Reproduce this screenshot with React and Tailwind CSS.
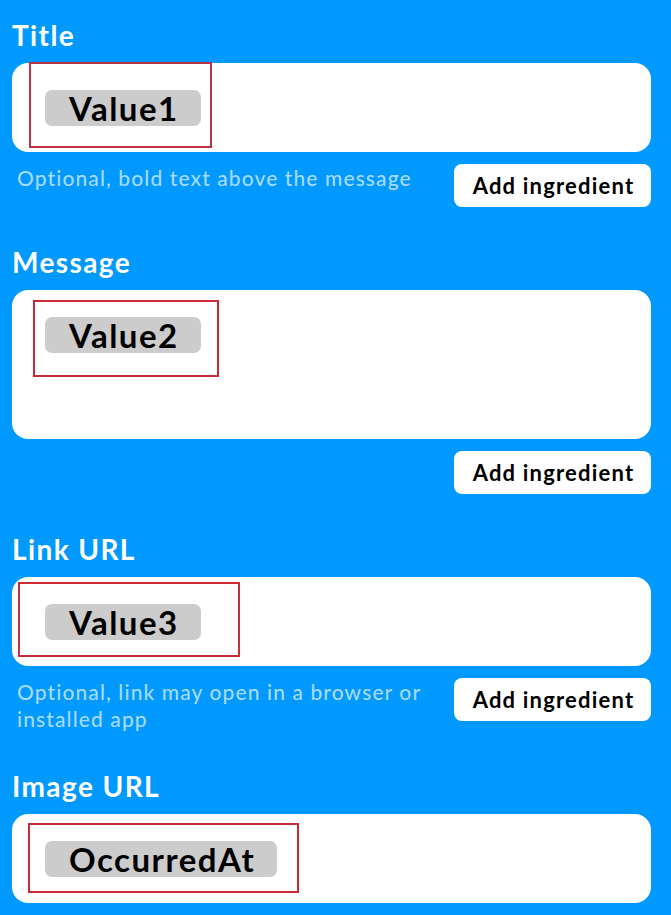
import React from "react";

const font = { fontFamily: "Lato, 'Noto Sans', sans-serif" };

function Label({ children, mt }) {
  return (
    <div className={`${mt} text-[28px] leading-[32px] font-bold tracking-[1.4px] text-white`}>
      {children}
    </div>
  );
}

function Pill({ children }) {
  return (
    <span className="inline-flex h-[36px] items-center rounded-[7px] bg-[#cccccc] pl-[24px] pr-[22px] text-[33px] leading-[36px] font-bold tracking-[1.5px] text-black">
      {children}
    </span>
  );
}

function Card({ tall, value, red }) {
  return (
    <div className={`relative mt-[12px] ${tall ? "h-[149px]" : "h-[89px]"} rounded-[16px] bg-white pl-[33px] pt-[27px]`}>
      <Pill>{value}</Pill>
      <div className={`absolute border-2 ${red}`} />
    </div>
  );
}

function Button() {
  return (
    <button className="flex h-[43px] w-[197px] shrink-0 items-center justify-center rounded-[8px] bg-white pl-[2px] text-[22px] font-bold tracking-[1.2px] text-black">
      Add ingredient
    </button>
  );
}

function Row({ help }) {
  return (
    <div className="mt-[12px] flex gap-[14px]">
      <div className="flex-1 pl-[5px] text-[21px] leading-[27px] font-medium tracking-[1.1px] text-[#a6daff]">{help}</div>
      <Button />
    </div>
  );
}

export default function App() {
  return (
    <div className="h-[915px] w-[671px] overflow-hidden bg-[#0099ff] pl-3 pr-5" style={font}>
      <Label mt="pt-[19px]">Title</Label>
      <Card value="Value1" red="border-[#b8343f] left-[17px] top-[-1px] w-[183px] h-[86px]" />
      <Row help="Optional, bold text above the message" />

      <Label mt="mt-[39px]">Message</Label>
      <Card tall value="Value2" red="border-[#cc2a36] left-[21px] top-[10px] w-[186px] h-[77px]" />
      <Row help="" />

      <Label mt="mt-[39px]">Link URL</Label>
      <Card value="Value3" red="border-[#cc2a36] left-[6px] top-[5px] w-[222px] h-[75px]" />
      <Row help="Optional, link may open in a browser or installed app" />

      <Label mt="mt-[38px]">Image URL</Label>
      <Card value="OccurredAt" red="border-[#cc2a36] left-[16px] top-[9px] w-[271px] h-[70px]" />
    </div>
  );
}
